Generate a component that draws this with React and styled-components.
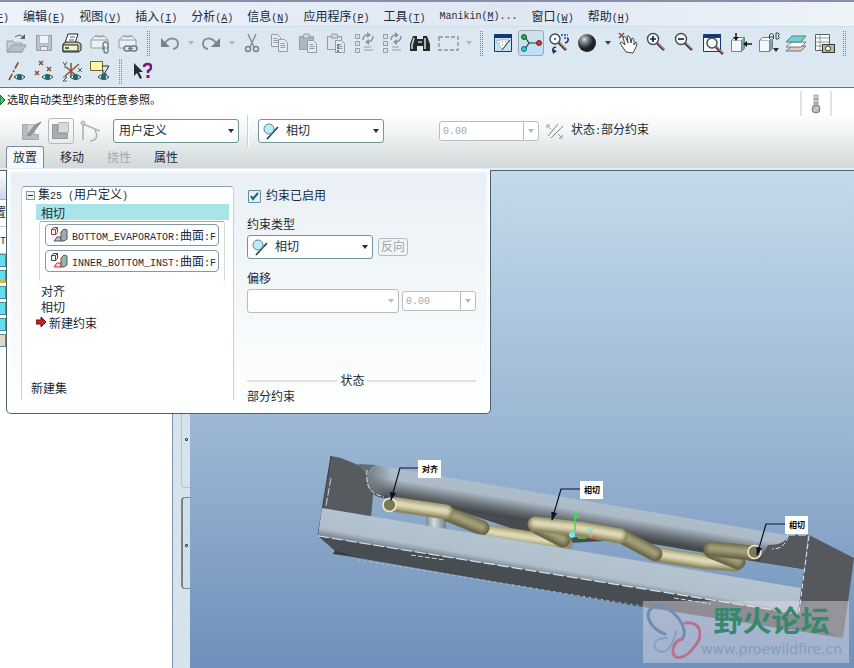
import React from "react";
import styled, { createGlobalStyle, css } from "styled-components";

const Global = createGlobalStyle`
  * { box-sizing: border-box; }
  body { margin: 0; overflow: hidden; }
  body, button, input, select {
    font-family: "Liberation Sans", "Noto Sans CJK SC", sans-serif;
    font-size: 12px;
    color: #202a38;
  }
  button { padding: 0; border: 0; background: none; }
`;

const Window = styled.div`
  display: flex;
  flex-direction: column;
  min-height: 100vh;
  line-height: 16px;
  overflow: hidden;
`;

const Latin = styled.span`
  font-family: "Liberation Mono", monospace;
  font-size: 10px;
`;

/* ---------- menu bar ---------- */
const MenuBar = styled.nav`
  display: flex;
  gap: 14px;
  height: 27px;
  padding-top: 4px;
  border-top: 2px solid #8790a8;
  border-bottom: 1px solid #cfdde8;
  background: linear-gradient(90deg, #edf3fa, #dfe7f3 60%, #eef3f9);
`;
const MenuItem = styled.button`
  flex: none;
  height: 18px;
  white-space: pre;
  &:first-child { margin-left: -33px; }
`;

/* ---------- toolbars ---------- */
const Toolbars = styled.div`
  padding: 2px;
  height: 61px;
  background: #dbe8f2;
  border-bottom: 1px solid #56779c;
`;
const ToolRow = styled.div`
  display: flex;
  align-items: center;
  height: 28px;
`;
const Tool = styled.button`
  flex: none;
  width: 28px;
  height: 28px;
  display: grid;
  place-items: center;
  & > svg { width: 24px; height: 24px; }
  ${(p) => p.$active && css`
    & > svg {
      width: 26px;
      height: 26px;
      border: 1px solid #9aabb8;
      border-radius: 3px;
      background: linear-gradient(#d5e0e9, #b9e0f8);
    }
  `}
`;
const Drop = styled.button`
  flex: none;
  width: 13px;
  height: 24px;
  display: grid;
  place-items: center;
  color: ${(p) => (p.disabled ? "#a9b7c4" : "#3c4650")};
`;
const Triangle = styled.span`
  border: 3px solid transparent;
  border-top: 4px solid currentColor;
  border-bottom: 0;
`;
const Grip = styled.span`
  flex: none;
  width: 4px;
  height: 26px;
  margin: 0 5px;
  background:
    repeating-linear-gradient(#dbe8f2 0 1px, transparent 1px 2px),
    repeating-linear-gradient(90deg, #6f879e 0 1px, transparent 1px 2px);
`;

/* ---------- dashboard ---------- */
const Dashboard = styled.section`
  height: 80px;
  background: linear-gradient(#fff 0, #fff 30%, #f4f6f7 52%, #d3d9da 98%);
`;
const MessageRow = styled.div`
  display: flex;
  justify-content: space-between;
  height: 28px;
`;
const Message = styled.p`
  display: flex;
  align-items: center;
  gap: 1px;
  height: 23px;
  margin: 0;
  font-size: 11px;
  color: #10161e;
`;
const Status = styled.div`
  display: grid;
  place-items: center;
  width: 32px;
  height: 25px;
  margin: 3px 22px 0 0;
  border: solid #e2e2e4;
  border-width: 0 2px;
`;
const ControlRow = styled.div`
  display: flex;
  align-items: center;
  height: 30px;
  padding-left: 18px;
`;
const Modes = styled.div`
  display: flex;
  gap: 4px;
  margin-right: 9px;
`;
const ModeButton = styled.button`
  width: 26px;
  height: 26px;
  display: grid;
  place-items: center;
  border-radius: 3px;
  border: 1px solid ${(p) => (p.$on ? "#b6babc" : "transparent")};
`;
const Rule = styled.span`
  width: 2px;
  height: 32px;
  margin: 0 9px 0 8px;
  background: linear-gradient(90deg, #cdd1d3 50%, #fff 50%);
`;
const Spacer = styled.span`
  width: 55px;
`;
const StateText = styled.span`
  display: flex;
  align-items: center;
  margin-left: 4px;
  gap: 4px;
`;
const Tabs = styled.div`
  display: flex;
  gap: 9px;
  height: 22px;
  padding-left: 6px;
`;
const Tab = styled.button`
  width: 38px;
  height: 22px;
  padding-bottom: 2px;
  border-radius: 3px 3px 0 0;
  color: ${(p) => (p.disabled ? "#a3a8ac" : "#202a38")};
  ${(p) => p.$active && css`
    border: 1px solid #7d8b95;
    border-bottom: 0;
    background: #f6f9fb;
  `}
`;

/* ---------- form controls ---------- */
const SelectBox = styled.span`
  display: grid;
  grid-template-columns: 26px 1fr 16px;
  align-items: center;
  width: ${(p) => p.$width || 126}px;
  height: 24px;
  color: ${(p) => (p.$off ? "#b9bec2" : "#263038")};
  & > * { grid-row: 1; }
  & > select {
    grid-column: 1 / -1;
    width: 100%;
    height: 24px;
    padding: 0 16px 1px ${(p) => (p.$icon ? 27 : 5)}px;
    appearance: none;
    border: 1px solid ${(p) => (p.$off ? "#b5bdc1" : "#6f9698")};
    border-radius: 3px;
    background: #fff;
    opacity: 1;
  }
  & > svg { grid-column: 1; justify-self: center; pointer-events: none; z-index: 1; }
  & > ${Triangle} { grid-column: 3; justify-self: center; pointer-events: none; z-index: 1; }
`;
const NumberBox = styled.span`
  display: flex;
  width: ${(p) => p.$width}px;
  height: 20px;
  border: 1px solid #b8bfc3;
  border-radius: 3px;
  background: #fff;
  overflow: hidden;
  & > input {
    flex: 1;
    min-width: 0;
    padding: 0 3px;
    border: 0;
    background: none;
    font-family: "Liberation Mono", monospace;
    font-size: 10px;
    color: #a5a8aa;
  }
  & > button {
    width: 15px;
    display: grid;
    place-items: center;
    border-left: 1px solid #b8bfc3;
    color: #b4b8bb;
  }
`;

/* ---------- workspace ---------- */
const Workspace = styled.main`
  position: relative;
  flex: 1;
  display: flex;
  min-height: 500px;
  border-top: 2px solid #e0eff5;
`;
const ModelTree = styled.aside`
  width: 172px;
  background: #fff;
  border-top: 1px solid #52606c;
  overflow: hidden;
`;
const TreeHead = styled.div`
  width: 6px;
  height: 29px;
  border-bottom: 1px solid #9dafbf;
  border-top-right-radius: 6px;
  background: linear-gradient(#fdfeff, #c9d8ea);
`;
const TreeText = styled.div`
  width: 6px;
  height: 27px;
  line-height: 27px;
  direction: rtl;
  overflow: hidden;
  white-space: nowrap;
  border-bottom: 1px solid #c0ccd3;
`;
const TreeNode = styled.div`
  width: 6px;
  height: 13px;
  margin-bottom: 3px;
  border: 1px solid #4e8b96;
  border-left: 0;
  border-bottom: ${(p) => (p.$mark ? "3px solid #d3ba3c" : "1px solid #4e8b96")};
  background: ${(p) => (p.$plain ? "#dcd9cc" : "#5fe0ec")};
`;
const Gutter = styled.div`
  width: 18px;
  display: flex;
  flex-direction: column;
  align-items: flex-end;
  gap: 9px;
  border-left: 1px solid #7896ab;
  border-top: 1px solid #52606c;
  background: repeating-linear-gradient(135deg, #cfe1ea 0 1px, #d8e5ec 1px 3px);
`;
const Handle = styled.button`
  width: 9px;
  height: ${(p) => p.$height}px;
  padding-top: ${(p) => p.$offset}px;
  display: flex;
  justify-content: center;
  align-items: center;
  border: 1px solid ${(p) => (p.$dark ? "#79848e" : "#a9c7d6")};
  border-left-width: ${(p) => (p.$dark ? 2 : 1)}px;
  border-right: 0;
  border-radius: 4px 0 0 4px;
  background: ${(p) => (p.$dark ? "#d0e0ea" : "transparent")};
`;
const Dot = styled.i`
  width: 3px;
  height: 3px;
  border: 1px solid #263442;
  border-radius: 1px;
`;
const Viewport = styled.div`
  position: relative;
  flex: 1;
  min-width: 0;
  border-top: 1px solid #52606c;
  background: linear-gradient(#c4daea, #9ab5d3 54%, #6f90ba);
  overflow: hidden;
  & > svg { display: block; position: absolute; inset: 0; width: 100%; height: 100%; }
`;
const Watermark = styled.div`
  position: absolute;
  right: 5px;
  bottom: 5px;
  display: flex;
  width: 206px;
  height: 62px;
  background: rgba(224, 218, 226, 0.46);
`;
const WatermarkText = styled.div`
  display: flex;
  flex-direction: column;
  align-items: center;
  padding-top: 3px;
`;
const ForumName = styled.strong`
  font-size: 29px;
  line-height: 36px;
  color: #35896f;
`;
const ForumUrl = styled.a`
  font-family: "DejaVu Sans", sans-serif;
  font-size: 14px;
  line-height: 18px;
  color: #809dc2;
  text-decoration: none;
`;

/* ---------- placement panel ---------- */
const Panel = styled.section`
  position: absolute;
  z-index: 2;
  left: 6px;
  top: -1px;
  display: flex;
  gap: 11px;
  width: 485px;
  height: 245px;
  padding: 15px 14px 8px 14px;
  border: 1px solid #4b616c;
  border-top: 2px solid #fbfdfe;
  border-radius: 0 0 5px 5px;
  background: linear-gradient(#e9f0f5, #fdfefe 94%);
  box-shadow: inset 3px 0 3px #fff, inset -3px 0 3px #fff;
`;
const SetList = styled.div`
  display: flex;
  flex-direction: column;
  width: 213px;
  height: 214px;
  border: 1px solid;
  border-color: #8c9ca5 #c9d1d5 transparent;
  border-radius: 4px 4px 0 0;
  background: #fff;
`;
const SetHead = styled.div`
  display: flex;
  align-items: center;
  gap: 3px;
  height: 17px;
  padding-left: 4px;
  white-space: pre;
`;
const Expander = styled.button`
  display: grid;
  place-items: center;
  width: 9px;
  height: 9px;
  border: 1px solid #8c979d;
  background: #eef3f4;
  &::after { content: ""; width: 5px; height: 1px; background: #202a38; }
`;
const Constraint = styled.button`
  display: flex;
  align-items: center;
  gap: 2px;
  height: 16px;
  margin: 0 4px 0 14px;
  padding-left: ${(p) => (p.$fresh ? 0 : 5)}px;
  background: ${(p) => (p.$selected ? "#a9e4e8" : "none")};
`;
const References = styled.div`
  display: flex;
  flex-direction: column;
  gap: 4px;
  height: 61px;
  margin: 1px 8px 0 17px;
  padding: 2px 5px;
  border: 1px solid;
  border-color: #9eacb0 #d5dcde transparent;
  border-radius: 3px;
`;
const Reference = styled.button`
  display: flex;
  align-items: center;
  gap: 4px;
  height: 22px;
  padding: 0 0 2px 4px;
  border: 1px solid #829aa1;
  border-radius: 4px;
  background: #fff;
  white-space: nowrap;
  & > svg { flex: none; }
`;
const NewSet = styled.button`
  align-self: flex-start;
  margin: auto 0 3px 9px;
  height: 18px;
`;
const Details = styled.div`
  flex: 1;
  display: flex;
  flex-direction: column;
  align-items: flex-start;
  padding: 1px 0 0 2px;
`;
const CheckLabel = styled.label`
  display: flex;
  align-items: center;
  gap: 5px;
  height: 18px;
  margin-left: 1px;
`;
const CheckWrap = styled.span`
  display: grid;
  place-items: center;
  & > * { grid-area: 1 / 1; }
  & > input {
    appearance: none;
    width: 13px;
    height: 13px;
    margin: 0;
    border: 1px solid #628fa3;
    border-radius: 1px;
    background: #dff1f7;
  }
  & > svg { pointer-events: none; }
`;
const FieldLabel = styled.label`
  height: 16px;
  margin: 12px 0 2px;
`;
const FieldRow = styled.div`
  display: flex;
  align-items: center;
  gap: ${(p) => p.$gap}px;
`;
const Flip = styled.button`
  width: 30px;
  height: 18px;
  line-height: 14px;
  border: 1px solid #b2bbc0;
  border-radius: 3px;
  color: #a0a6aa;
`;
const StatusHead = styled.div`
  display: flex;
  align-items: center;
  gap: 3px;
  align-self: stretch;
  height: 16px;
  margin-top: auto;
  &::before, &::after { content: ""; flex: 1; height: 2px; background: #dde2e5; }
  &::after { flex: 1.2; }
`;

/* ---------- icons ---------- */
const Icon = ({ children, size = 24, width = size }) => (
  <svg width={width} height={size} viewBox={`0 0 ${width} ${size}`} fill="none" aria-hidden="true">{children}</svg>
);
const G = "#929da7";
const Eye = () => (
  <g>
    <path d="M10 18q5-5 11 0q-5 5-11 0" fill="#eef8f6" stroke="#23414b" />
    <circle cx="15.500" cy="18" r="2.600" fill="#176d68" />
  </g>
);
const Lens = ({ x = 9, y = 8, r = 5.5 }) => (
  <g>
    <path d={`M${x + 4} ${y + 4}l7 7`} stroke="#5c3b36" strokeWidth="2.600" />
    <path d={`M${x + 5} ${y + 4}l6 6`} stroke="#d19b87" />
    <circle cx={x} cy={y} r={r} fill="#f8fbfb" stroke="#3f4c54" strokeWidth="1.400" />
  </g>
);
const OpenIcon = () => <Icon><path d="M3 10h6l2 2h7v9H3z" fill="#c9d0d5" stroke={G} /><path d="M3 21l5-7h14l-4 7z" fill="#b7c0c7" stroke={G} /><path d="M11 6q5-4 9 1" stroke="#56636e" /><path d="M21 3v5h-5z" fill="#56636e" /></Icon>;
const SaveIcon = () => <Icon><path d="M4.500 4.500h15v15h-15z" fill="#bac5ce" stroke={G} /><path d="M7.500 4.500h9v8h-9z" fill="#f1f4f6" stroke="#aeb9c2" /><path d="M8.500 15.500h7v4h-7z" fill="#e8edf1" stroke={G} /></Icon>;
const PrintIcon = () => <Icon><path d="M8 3h10l-3 9H5z" fill="#fff" stroke="#25292b" /><path d="M10 6h5M9 9h5" stroke="#4c5458" /><path d="M3 13l3-2h12l3 2v6l-2 2H3z" fill="#c9c8a0" stroke="#25292b" /><path d="M3 14h15v6H3z" fill="#f2f1cc" stroke="#25292b" /><path d="M5 17h4" stroke="#2b823e" strokeWidth="2" /></Icon>;
const MailIcon = ({ link }) => <Icon><path d="M3 9l4-4h9l4 4v8H3z" fill="#edf0f2" stroke={G} /><path d="M3 9h17M7 5q5 2 9 0" stroke={G} />{link ? <g stroke="#6f7c87" strokeWidth="1.500" fill="#dce5eb"><rect x="8" y="15" width="7" height="5" rx="2.500" /><rect x="14" y="15" width="7" height="5" rx="2.500" /><path d="M12 17.500h5" /></g> : <path d="M15 19v-5q0-3 2.500-3t2.500 3v6q0 2-2 2t-2-2v-5" stroke="#74818c" strokeWidth="1.400" />}</Icon>;
const UndoIcon = ({ flip }) => <Icon><g transform={flip ? "matrix(-1 0 0 1 24 0)" : undefined}><path d="M7 12C11 6 20 6 20 13q0 4-5 5" stroke="#84909c" strokeWidth="2" /><path d="M3 7v9h9z" fill="#77848f" /></g></Icon>;
const CutIcon = () => <Icon><path d="M8 3l6 13M16 3l-6 13" stroke="#87939c" strokeWidth="1.600" /><circle cx="8" cy="18" r="2.500" stroke="#75828c" strokeWidth="1.500" /><circle cx="16" cy="18" r="2.500" stroke="#75828c" strokeWidth="1.500" /></Icon>;
const Sheet = ({ x, y }) => <g><path d={`M${x} ${y}h6l3 3v9h-9z`} fill="#e4e9ec" stroke={G} /><path d={`M${x + 2} ${y + 4}h4M${x + 2} ${y + 6}h5M${x + 2} ${y + 8}h5`} stroke={G} /></g>;
const CopyIcon = () => <Icon><Sheet x={3.5} y={3.5} /><Sheet x={10.5} y={8.5} /></Icon>;
const PasteIcon = ({ special }) => <Icon><path d="M3.500 5.500h14v13h-14z" fill={special ? "#dde3e8" : "#aeb8c0"} stroke={G} /><path d="M7 7l1-4h5l1 4z" fill="#d3dae0" stroke={G} /><Sheet x={11.5} y={9.5} />{special && <path d="M13 14h2M13 17h2M13 20h2" stroke="#6d7881" strokeWidth="2" />}</Icon>;
const RegenIcon = () => <Icon><g fill="#dce3e7" stroke={G}><path d="M3.500 3.500h4v4h-4zM3.500 10.500h4v4h-4zM3.500 17.500h4v4h-4z" /></g><path d="M12 16h7M12 19h9" stroke={G} /><path d="M11 9q0-5 5-5M21 5q0 5-5 6" stroke="#8a969f" strokeWidth="1.500" /><path d="M15 1l4 3-4 3zM17 8l-4 3 4 3z" fill="#8a969f" /></Icon>;
const FindIcon = () => <Icon><path d="M5 5h4v3h6V5h4l3 8v7h-7v-5H9v5H2v-7z" fill="#24292b" /><path d="M6 7l-2 7v4M17 7v11" stroke="#cfd3cf" strokeWidth="1.600" /><path d="M10 11h4" stroke="#9aa19d" strokeWidth="2" /></Icon>;
const SelectIcon = () => <Icon><path d="M3 6h19v13H3z" stroke="#86929b" strokeWidth="1.300" strokeDasharray="4 2" /></Icon>;
const RepaintIcon = () => <Icon><path d="M3.500 3.500h17v17h-17z" fill="#c5e2f5" stroke="#173974" /><path d="M4 3h17v4H4z" fill="#153774" /><path d="M5 10q6-2 13-1l-7 10q-2-5-6-9" fill="#fff" stroke="#a9b7c3" /><path d="M11 19l8-10" stroke="#27313b" /><path d="M8 12h1M11 11h1M11 14h1M14 11h1" stroke="#5b7184" /></Icon>;
const SpinIcon = () => <Icon><path d="M6 6l4 6-4 6M10 12h9" stroke="#2d383f" strokeWidth="1.200" /><circle cx="5" cy="6" r="2.500" fill="#24ad53" stroke="#115e32" /><circle cx="5" cy="18" r="2.500" fill="#39c5d0" stroke="#146d76" /><circle cx="20" cy="12" r="2.500" fill="#d73b3b" stroke="#761c1c" /></Icon>;
const OrientIcon = () => <Icon><Lens x={8} y={8} r={5} /><circle cx="8" cy="8" r="1" fill="#263e6a" /><path d="M14 4h7M17 7h4" stroke="#304b84" strokeWidth="1.500" strokeDasharray="2 1" /><path d="M7 21q-3-4 2-5M18 12q4-1 3-5" stroke="#172e70" strokeWidth="1.500" /><path d="M5 18l5 2-4 3z" fill="#172e70" /></Icon>;
const SphereIcon = () => <Icon><defs><radialGradient id="ball" cx="35%" cy="30%"><stop stopColor="#dce0e3" /><stop offset=".4" stopColor="#7c858c" /><stop offset="1" stopColor="#1d2226" /></radialGradient></defs><circle cx="12" cy="12" r="9" fill="url(#ball)" /></Icon>;
const HandIcon = () => <Icon><path d="M3 2l5 5M8 2L3 7" stroke="#884f38" strokeWidth="1.500" /><path d="M10 21l-6-9q1-2 3 0l2 2-2-8q1-2 3 1l2 5-1-7q2-1 3 2l1 5 1-5q2 0 2 3v4l2-3q2 1 0 5l-3 6z" fill="#fff" stroke="#42474a" /></Icon>;
const ZoomIcon = ({ plus }) => <Icon><Lens /><path d={plus ? "M6 8h6M9 5v6" : "M6 8h6"} stroke="#1d2931" strokeWidth="1.700" /></Icon>;
const RefitIcon = () => <Icon><path d="M3.500 3.500h17v17h-17z" fill="#eef6fb" stroke="#173974" /><path d="M4 3h17v4H4z" fill="#153774" /><Lens x={12} y={12} r={5} /></Icon>;
const Cube = () => <g stroke="#6e8587"><path d="M3.500 9.500h10v11h-10z" fill="#f4f8f8" /><path d="M3.500 9.500l3-3h10l-3 3" fill="#fff" /><path d="M16.500 6.500v11l-3 3v-11" fill="#70aaa5" /></g>;
const ViewIcon = () => <Icon><Cube /><path d="M8 2v6M24 13h-6" stroke="#151b1f" strokeWidth="1.500" /><path d="M5 6h6l-3 4zM19 10v6l-4-3z" fill="#151b1f" /></Icon>;
const ViewListIcon = () => <Icon><Cube /><g stroke="#32414c"><path d="M13.500 8V4l2-2 2 2v4M13.500 6h4M20 2v6h2q3-2 0-3 3-2 0-3z" fill="#dbe8f2" /></g><path d="M17 17h6l-3 4z" fill="#243038" /></Icon>;
const LayersIcon = () => <Icon><g stroke="#66797e"><path d="M2 20l6-5h14l-5 5z" fill="#e5c8c2" /><path d="M2 16l6-5h14l-5 5z" fill="#fff" /><path d="M2 11l6-6h14l-5 6z" fill="#68d4d8" /></g></Icon>;
const ShotIcon = () => <Icon><path d="M3.500 3.500h14v16h-14z" fill="#fff" stroke="#56646b" /><path d="M4 7h13M4 11h13M4 15h13M8 4v15" stroke="#89969d" /><rect x="10.500" y="13.500" width="12" height="8" fill="#b8b998" stroke="#343934" /><circle cx="16" cy="17.500" r="2.500" fill="#f0f1e7" stroke="#343934" /></Icon>;
const AxisIcon = () => <Icon><path d="M5 21L15 2" stroke="#8e4f32" strokeWidth="1.700" strokeDasharray="7 2 2 2" /><Eye /></Icon>;
const Cross = ({ x, y }) => <path d={`M${x} ${y}l4 4m0-4l-4 4`} stroke="#8e4f32" strokeWidth="1.500" />;
const PointIcon = () => <Icon><Cross x={7} y={2} /><Cross x={3} y={12} /><Cross x={15} y={8} /><Eye /></Icon>;
const CsysIcon = () => <Icon><path d="M5 17L19 5M6 8l12 10M11 4v15" stroke="#8e4f32" strokeWidth="1.500" /><path d="M3 3l2 3 2-3M5 6v3M18 9l4 4m0-4l-4 4M3 18h4l-4 4h4" stroke="#4b5967" /><Eye /></Icon>;
const NoteIcon = () => <Icon><path d="M2.500 2.500h12v9h-12z" fill="#fff5a9" stroke="#6d652b" /><path d="M14 7h7l-5 8M15 11v4h4" stroke="#253038" /><Eye /></Icon>;
const HelpIcon = () => <Icon><path d="M4 4v13l3-3 3 6 2-1-3-6h4z" fill="#242c32" /><path d="M14 8q0-3 4-3 3 0 3 3t-3 4v2" stroke="#7c1472" strokeWidth="2.400" /><path d="M16.500 16h3v3h-3z" fill="#7c1472" /></Icon>;
const TangentIcon = () => <Icon size={20}><circle cx="8" cy="8" r="5" fill="#b8eef8" stroke="#598494" /><path d="M6 18L17 6" stroke="#26323a" strokeWidth="1.600" /><path d="M8 15l6-6" stroke="#418dae" /></Icon>;
const PartIcon = ({ second }) => <Icon size={18}><path d="M1.500 4.500l2-2h4v5l-2 2h-4zM1.500 4.500h4v5m0-5l2-2" fill="#f7eeee" stroke={second ? "#424b4e" : "#c02f35"} /><path d="M4 16l3-4h4v4H4z" fill={second ? "#ffd8d8" : "#bfc3c7"} stroke={second ? "#c02f35" : "#50575c"} /><path d="M11 7l3-3 3 1v9l-3 2h-3z" fill={second ? "#68cabc" : "#a5a9ad"} stroke={second ? "#c02f35" : "#50575c"} /></Icon>;

const rowOne = [
  ["打开", OpenIcon], ["保存", SaveIcon], ["打印", PrintIcon], ["发送", MailIcon], ["发送链接", MailIcon, { link: true }], "grip",
  ["撤消", UndoIcon], "off", ["重做", UndoIcon, { flip: true }], "off",
  ["剪切", CutIcon], ["复制", CopyIcon], ["粘贴", PasteIcon], ["选择性粘贴", PasteIcon, { special: true }],
  ["再生", RegenIcon], ["再生管理器", RegenIcon], ["查找", FindIcon], ["选取", SelectIcon], "off", "grip",
  ["重画", RepaintIcon], ["旋转中心", SpinIcon, {}, true], ["定向模式", OrientIcon], ["外观", SphereIcon], "on",
  ["平移", HandIcon], ["放大", ZoomIcon, { plus: true }], ["缩小", ZoomIcon], ["重新调整", RefitIcon],
  ["重定向", ViewIcon], ["视图列表", ViewListIcon], ["层", LayersIcon], ["视图管理器", ShotIcon], "grip",
];
const rowTwo = [["轴显示", AxisIcon], ["点显示", PointIcon], ["坐标系显示", CsysIcon], ["注释显示", NoteIcon], "grip", ["帮助", HelpIcon]];

const ToolStrip = ({ items }) => (
  <ToolRow role="toolbar">
    {items.map((item, i) => {
      if (item === "grip") return <Grip key={i} />;
      if (item === "on" || item === "off") return <Drop key={i} disabled={item === "off"} aria-label="更多"><Triangle /></Drop>;
      const [label, Glyph, props, active] = item;
      return <Tool key={i} aria-label={label} $active={active}><Glyph {...props} /></Tool>;
    })}
  </ToolRow>
);

const Select = ({ label, value = "", icon, off, width, id }) => (
  <SelectBox $icon={icon} $off={off} $width={width}>
    <select id={id} aria-label={label} disabled={off}><option>{value}</option></select>
    {icon && <TangentIcon />}
    <Triangle />
  </SelectBox>
);
const NumberField = ({ width }) => (
  <NumberBox $width={width}>
    <input aria-label="偏移值" defaultValue="0.00" disabled />
    <button aria-label="偏移值列表" disabled><Triangle /></button>
  </NumberBox>
);

/* ---------- model view ---------- */
const tubeTones = {
  light: ["#8d8862", "#a8a37b", "#beb991", "#d2cda8", "#ddd8b5"],
  shade: ["#6b6749", "#7b7757", "#8a8663", "#989470", "#a19d79"],
};
const Tube = ({ d, tone = "light" }) => (
  <g fill="none" strokeLinecap="round" strokeLinejoin="round">
    {tubeTones[tone].map((color, i) => (
      <path key={color} d={d} stroke={color} strokeWidth={15 - i * 3} transform={`translate(0 ${i ? -1 : 0})`} />
    ))}
  </g>
);
const Callout = ({ x, y, text, leader }) => (
  <g>
    <path d={leader} fill="none" stroke="#0b1034" strokeWidth="1.200" markerEnd="url(#tip)" />
    <rect x={x} y={y} width="23" height="18" fill="#fff" />
    <text x={x + 4} y={y + 12} fontSize="8" fontWeight="700" fill="#000">{text}</text>
  </g>
);
const Scene = () => (
  <svg viewBox="190 171 664 497" preserveAspectRatio="xMinYMin slice" role="img" aria-label="装配模型">
    <defs>
      <linearGradient id="back" gradientUnits="userSpaceOnUse" x1="580" y1="498" x2="575" y2="528">
        <stop stopColor="#adbecc" /><stop offset=".4" stopColor="#acbac6" /><stop offset=".8" stopColor="#62686d" /><stop offset="1" stopColor="#45494c" />
      </linearGradient>
      <linearGradient id="front" gradientUnits="userSpaceOnUse" x1="560" y1="547" x2="555" y2="576">
        <stop stopColor="#b3c3d0" /><stop offset=".75" stopColor="#b0bfcb" /><stop offset="1" stopColor="#7b858d" />
      </linearGradient>
      <linearGradient id="peg"><stop stopColor="#7c8790" /><stop offset=".4" stopColor="#d2dce4" /><stop offset="1" stopColor="#727d87" /></linearGradient>
      <linearGradient id="cap"><stop stopColor="#6f7982" /><stop offset="1" stopColor="#6f7982" stopOpacity="0" /></linearGradient>
      <marker id="tip" markerUnits="userSpaceOnUse" markerWidth="9" markerHeight="7" refX="8" refY="3" orient="auto"><path d="M0 0l9 3-9 3z" fill="#0b1034" /></marker>
    </defs>
    <path d="M331 456l10 2 32 13 0 24-2 23-53 17z" fill="#565b60" />
    <path d="M358 464l18 1-8 12z" fill="#656d74" />
    <path d="M318 535l13-79" stroke="#353b40" />
    <path d="M331 478l-5 28" stroke="#c6d3dc" strokeDasharray="8 2" />
    <path d="M426 516h20v18l-20-3z" fill="url(#peg)" />
    <path d="M376 465L786 535l22 0-5 34-45-7-375-64q-17-4-16-17t9-16z" fill="url(#back)" />
    <path d="M376 465l16 3v30l-9-2q-17-4-16-15t9-16z" fill="url(#cap)" />
    <path d="M768 545q18 0 20-10l20 0-4 34-45-7z" fill="#54595e" />
    <path d="M788 536q-3 13-16 13M367 470q-2 21 11 25l6 2" fill="none" stroke="#dce5eb" strokeDasharray="5 2" />
    <path d="M450 508l80 14 30 14 60 4 45 12 60 8-30 2-45-8-30-14-50 3-60-15z" fill="#484c50" />
    <Tube d="M486 532L545 541L565 543" />
    <Tube tone="shade" d="M448 514L482 528" />
    <Tube d="M392 504L446 512" />
    <Tube tone="shade" d="M563 540L538 527" />
    <Tube d="M660 555L705 562L736 564" />
    <Tube tone="shade" d="M625 538L655 554" />
    <Tube tone="shade" d="M738 562L711 551" />
    <Tube d="M535 524L580 529L620 536" />
    <Tube tone="shade" d="M711 549L752 553" />
    <g fill="#7d7855" stroke="#f0ebcc" strokeWidth="1.600"><circle cx="389.500" cy="505" r="6.500" /><circle cx="754.500" cy="556" r="6.500" transform="translate(0 -4)" /></g>
    <path d="M318 536l481 78 44 24-206-32-279-48-24-8z" fill="#484d51" />
    <path d="M335 550l-2 4 27 4z" fill="#383d41" />
    <path d="M322 508L801 588L798 614L318 535z" fill="url(#front)" />
    <path d="M318 536l480 78" stroke="#d8e2e9" strokeWidth="1.200" strokeDasharray="11 3" />
    <path d="M358 560l285 46" stroke="#b7cadb" strokeDasharray="2 4" />
    <path d="M411 555l34 5M674 598l37 6" stroke="#cfd7dd" strokeDasharray="5 2" />
    <path d="M809 535l45 23-11 80-45-25z" fill="#55595d" />
    <path d="M809 536l-10 77" stroke="#e1e8ed" strokeDasharray="5 3" />
    <path d="M787 535h22" stroke="#e1e8ed" strokeDasharray="8 3" />
    <g fill="none"><path d="M575 531v-17" stroke="#44dd4b" strokeWidth="1.500" /><path d="M578 538h8" stroke="#49bb44" strokeWidth="2" /><path d="M585 537h8v2" stroke="#d9653b" strokeWidth="2" /><path d="M588 528l3 3 3-3m-3 3v6" stroke="#66dce0" /></g>
    <circle cx="576" cy="516" r="2.500" fill="#42d747" /><circle cx="572" cy="535" r="3" fill="#68ebee" />
    <Callout x={418} y={460} text="对齐" leader="M418 468H400L391 500" />
    <Callout x={580} y={481} text="相切" leader="M580 489H561L552 520" />
    <Callout x={785} y={516} text="相切" leader="M785 524H766L757 555" />
  </svg>
);
const ForumLogo = () => (
  <Icon size={62} width={58}>
    <g strokeLinecap="round">
      <path d="M39 38C48 28 29 4 14 5C-1 7 4 27 22 33" stroke="#6f8eb7" strokeWidth="3" />
      <path d="M24 37C8 36 8 51 20 51Q29 49 33 30" stroke="#88a1c2" strokeWidth="2" />
      <path d="M42 22C58 20 61 34 52 45C42 59 29 60 30 49Q31 40 39 38" stroke="#b9728e" strokeWidth="3" />
    </g>
  </Icon>
);

const menus = [["文件", "F"], ["编辑", "E"], ["视图", "V"], ["插入", "I"], ["分析", "A"], ["信息", "N"], ["应用程序", "P"], ["工具", "T"], ["Manikin", "M", "..."], ["窗口", "W"], ["帮助", "H"]];

export default function App() {
  return (
    <Window>
      <Global />
      <MenuBar>
        {menus.map(([name, key, tail]) => (
          <MenuItem key={name}>{name === "Manikin" ? <Latin>{name}</Latin> : name}<Latin>(<u>{key}</u>){tail}</Latin></MenuItem>
        ))}
      </MenuBar>
      <Toolbars>
        <ToolStrip items={rowOne} />
        <ToolStrip items={rowTwo} />
      </Toolbars>
      <Dashboard>
        <MessageRow>
          <Message>
            <Icon size={12} width={6}><path d="M0 1l5 5-5 5z" fill="#3ccf72" stroke="#16592f" /></Icon>
            选取自动类型约束的任意参照。
          </Message>
          <Status>
            <Icon size={22} width={12}><path d="M4 2h4v11H4z" fill="#cdd0d2" stroke="#a6abad" /><path d="M4 6h4M4 10h4" stroke="#858b8e" /><circle cx="6" cy="16" r="4" fill="#b4b8ba" stroke="#777d80" /><path d="M4 18l4-4" stroke="#e6e8e9" /></Icon>
          </Status>
        </MessageRow>
        <ControlRow>
          <Modes>
            <ModeButton aria-label="界面放置"><Icon><path d="M3.500 5.500h5v10h11v5h-16z" fill="#b9bcbe" stroke="#a4a8aa" /><path d="M8.500 5.500h7v10h-7z" fill="#d0d3d4" stroke="#b4b8ba" /><path d="M9 17l3-1 10-13-6 3-7 9z" fill="#969b9e" stroke="#808689" /></Icon></ModeButton>
            <ModeButton $on aria-label="手动放置"><Icon><path d="M3.500 5.500h5v9h10v5h-15z" fill="#a9adb0" stroke="#95999c" /><path d="M9.500 3.500h10v10h-10z" fill="#d7d9da" stroke="#b2b6b8" /></Icon></ModeButton>
            <ModeButton aria-label="转换"><Icon><path d="M4 4v17M4 5l17 7M16 11q5 10-5 11" stroke="#aeb2b4" strokeWidth="1.600" /><circle cx="4" cy="4" r="2" fill="#d2d5d6" stroke="#aeb2b4" /></Icon></ModeButton>
          </Modes>
          <Select label="连接类型" value="用户定义" />
          <Rule />
          <Select label="约束类型" value="相切" icon />
          <Spacer />
          <NumberField width={100} />
          <StateText>
            <Icon size={20} width={24}><path d="M5 15L15 3M8 17l12-12" stroke="#85898c" /><path d="M4 4l4 4M4 7V4h3M15 13l4 4M19 14v3h-3" stroke="#9a9ea0" /></Icon>
            <span>状态<Latin>:</Latin>部分约束</span>
          </StateText>
        </ControlRow>
        <Tabs role="tablist">
          <Tab role="tab" aria-selected="true" $active>放置</Tab>
          <Tab role="tab">移动</Tab>
          <Tab role="tab" disabled>挠性</Tab>
          <Tab role="tab">属性</Tab>
        </Tabs>
      </Dashboard>
      <Workspace>
        <ModelTree>
          <TreeHead />
          <TreeText>放置</TreeText>
          <TreeText><Latin>SET</Latin></TreeText>
          <TreeNode /><TreeNode $mark /><TreeNode /><TreeNode /><TreeNode /><TreeNode $plain />
        </ModelTree>
        <Gutter>
          <Handle $height={317} $offset={220} aria-label="折叠导航器"><Dot /></Handle>
          <Handle $height={92} $offset={4} $dark aria-label="折叠浏览器"><Dot /></Handle>
        </Gutter>
        <Viewport>
          <Scene />
          <Watermark>
            <ForumLogo />
            <WatermarkText>
              <ForumName>野火论坛</ForumName>
              <ForumUrl href="http://www.proewildfire.cn">www.proewildfire.cn</ForumUrl>
            </WatermarkText>
          </Watermark>
        </Viewport>
        <Panel>
          <SetList>
            <SetHead><Expander aria-label="折叠" /><span>集<Latin>25 (</Latin>用户定义<Latin>)</Latin></span></SetHead>
            <Constraint $selected>相切</Constraint>
            <References>
              <Reference><PartIcon /><span><Latin>BOTTOM_EVAPORATOR:</Latin>曲面<Latin>:F</Latin></span></Reference>
              <Reference><PartIcon second /><span><Latin>INNER_BOTTOM_INST:</Latin>曲面<Latin>:F</Latin></span></Reference>
            </References>
            <Constraint>对齐</Constraint>
            <Constraint>相切</Constraint>
            <Constraint $fresh><Icon size={12} width={11}><path d="M0 4h5V1l5 5-5 5V8H0z" fill="#cf1c1c" stroke="#681010" /></Icon>新建约束</Constraint>
            <NewSet>新建集</NewSet>
          </SetList>
          <Details>
            <CheckLabel>
              <CheckWrap>
                <input type="checkbox" defaultChecked />
                <Icon size={13}><path d="M3 6l2 3 5-6" stroke="#2c5569" strokeWidth="2" /></Icon>
              </CheckWrap>
              约束已启用
            </CheckLabel>
            <FieldLabel htmlFor="kind">约束类型</FieldLabel>
            <FieldRow $gap={5}><Select id="kind" value="相切" icon /><Flip disabled>反向</Flip></FieldRow>
            <FieldLabel htmlFor="offset">偏移</FieldLabel>
            <FieldRow $gap={3}><Select id="offset" off width={152} /><NumberField width={74} /></FieldRow>
            <StatusHead>状态</StatusHead>
            <span>部分约束</span>
          </Details>
        </Panel>
      </Workspace>
    </Window>
  );
}
